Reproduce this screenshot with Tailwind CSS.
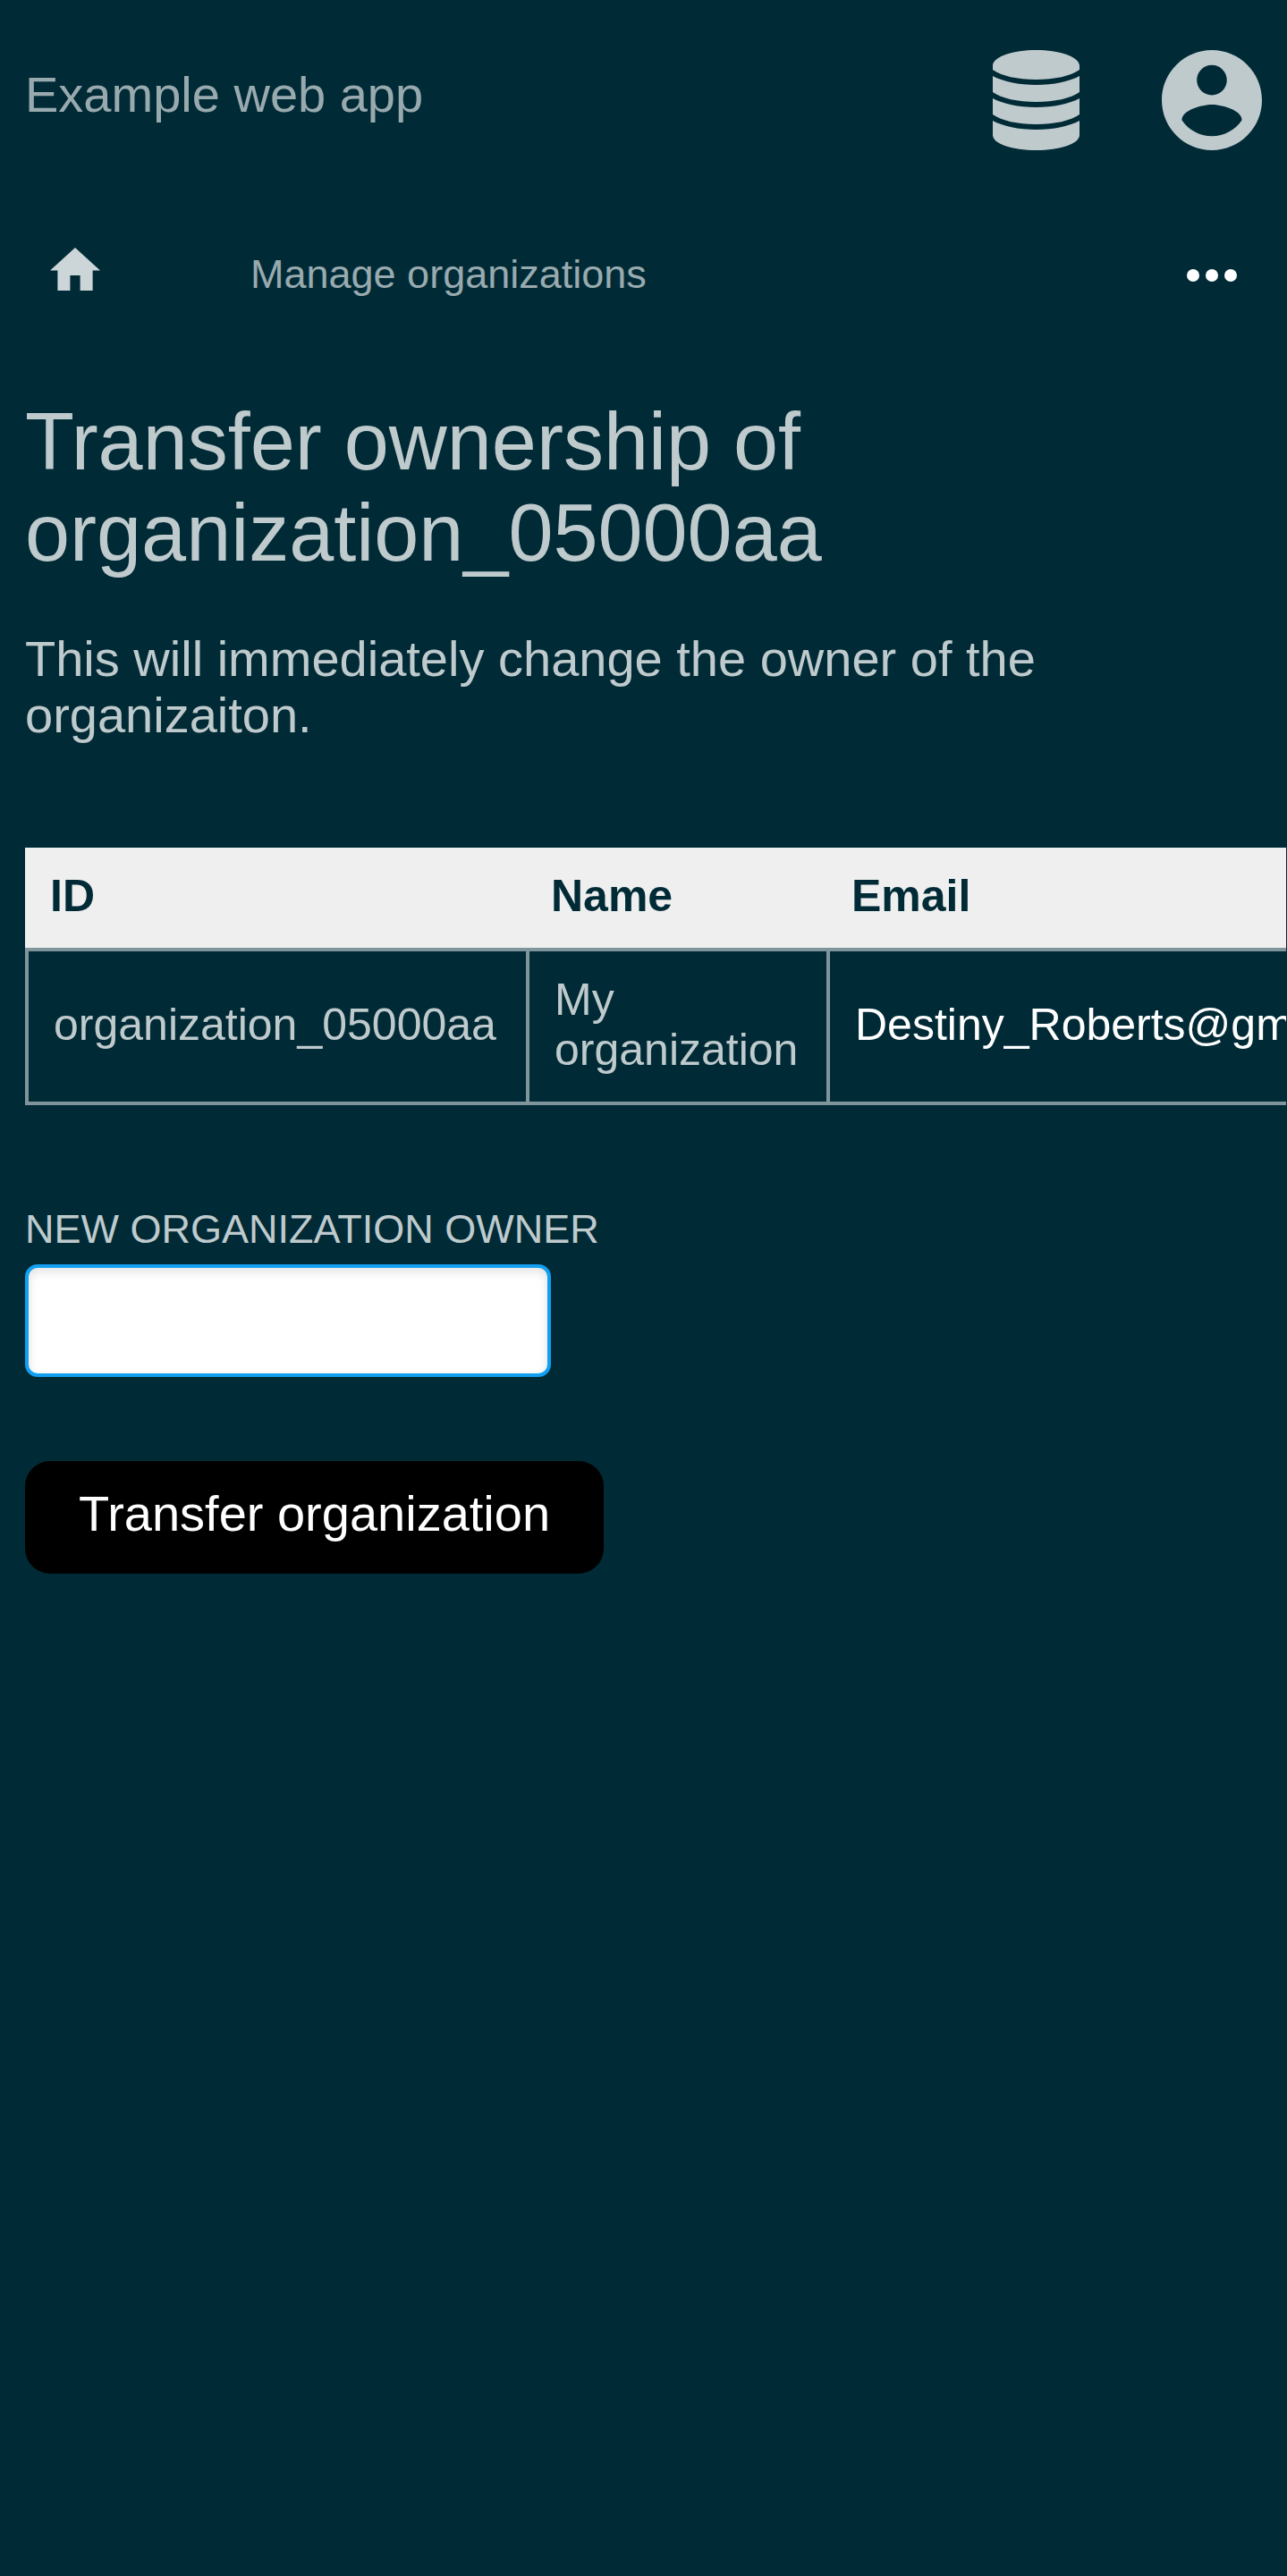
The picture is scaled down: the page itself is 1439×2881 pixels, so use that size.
<!DOCTYPE html>
<html lang="en">
<head>
<meta charset="utf-8">
<title>Transfer ownership</title>
<script src="https://cdn.jsdelivr.net/npm/@tailwindcss/browser@4"></script>
</head>
<body class="min-h-screen overflow-x-hidden bg-[#002b36] font-['Liberation_Sans',Arial,sans-serif] text-[#bfcacd]">
<header class="flex items-center justify-between px-7 pt-14">
  <a href="#" class="-mt-3 text-[56px] leading-[64px] text-[#99aaaf]">Example web app</a>
  <div class="flex gap-[84px]">
    <a href="#" aria-label="Administration" class="flex h-28 w-28 justify-center">
      <svg class="h-28 w-28" viewBox="0 0 112 112" fill="currentColor"><path d="M7 17C8 7 30 0 55.500 0S103 7 104 17V22C94 29 76 33 55.500 33S17 29 7 22ZM7 29C18 35 36 39 55.500 39S93 35 104 29V47C94 54 76 58 55.500 58S17 54 7 47ZM7 54C18 60 36 64 55.500 64S93 60 104 54V72C94 79 76 83 55.500 83S17 79 7 72ZM7 79C18 85 36 89 55.500 89S93 85 104 79V95C104 105 82 112 55.500 112S7 105 7 95Z"/></svg>
    </a>
    <a href="#" aria-label="Account" class="h-28 w-28">
      <svg class="h-28 w-28" viewBox="2 2 20 20" fill="currentColor"><path d="M12 2C6.480 2 2 6.480 2 12s4.480 10 10 10 10-4.480 10-10S17.520 2 12 2zm0 3c1.660 0 3 1.340 3 3s-1.340 3-3 3-3-1.340-3-3 1.340-3 3-3zm0 14.200c-2.500 0-4.710-1.280-6-3.220.03-1.990 4-3.080 6-3.080 1.990 0 5.970 1.090 6 3.080-1.290 1.940-3.500 3.220-6 3.220z"/></svg>
    </a>
  </div>
</header>
<nav class="mt-[84px] flex h-28 items-center px-14">
  <a href="#" aria-label="Home" class="mb-3.5 text-[#ccd5d7]"><svg class="h-12 w-14" viewBox="2 3 20 17" preserveAspectRatio="none" fill="currentColor"><path d="M10 20V14H14V20H19V12H22L12 3L2 12H5V20H10Z"/></svg></a>
  <a href="#" class="ml-[168px] pb-0.5 text-[45px] leading-[52px] text-[#99aaaf]">Manage organizations</a>
  <button type="button" aria-label="More" class="ml-auto text-white"><svg class="h-14 w-14" viewBox="0 0 56 56" fill="currentColor"><circle cx="7" cy="28" r="7"/><circle cx="28" cy="28" r="7"/><circle cx="49" cy="28" r="7"/></svg></button>
</nav>
<main class="pl-7">
  <h1 class="mt-[79px] max-w-[1000px] text-[90px] leading-[102px]">Transfer ownership of organization_05000aa</h1>
  <p class="mt-[58px] max-w-[1240px] text-[56px] leading-[63px]">This will immediately change the owner of the organizaiton.</p>
  <div class="mt-[117px] mr-px overflow-hidden">
    <table class="border-separate border-spacing-0 text-left text-[50px] leading-[56px]">
      <thead>
        <tr class="bg-[#efefef] text-[#002b36]"><th class="min-w-[560px] px-7 pt-[26px] pb-[30px]">ID</th><th class="min-w-[336px] px-7 pt-[26px] pb-[30px]">Name</th><th class="px-7 pt-[26px] pb-[30px]">Email</th></tr>
      </thead>
      <tbody>
        <tr>
          <td class="border-y-4 border-l-4 border-white/50 px-7 pt-[26px] pb-[30px]">organization_05000aa</td>
          <td class="border-y-4 border-l-4 border-white/50 px-7 pt-[26px] pb-[30px]">My<br>organization</td>
          <td class="border-4 border-white/50 px-7 pt-[26px] pb-[30px]"><a href="#" class="text-white">Destiny_Roberts@gmail.com</a></td>
        </tr>
      </tbody>
    </table>
  </div>
  <form class="mt-28 flex flex-col items-start">
    <label for="owner" class="text-[45px] leading-[54px]">NEW ORGANIZATION OWNER</label>
    <input id="owner" type="text" class="mt-3 h-[126px] w-[588px] rounded-[14px] border-4 border-[#139ff0] bg-white px-6 text-[56px] text-black shadow-[inset_0_4px_11px_rgba(0,0,0,0.12)] outline-none">
    <button type="submit" class="mt-[94px] h-[126px] rounded-[28px] bg-black px-[60px] pb-2 text-[56px] text-white">Transfer organization</button>
  </form>
</main>
</body>
</html>
